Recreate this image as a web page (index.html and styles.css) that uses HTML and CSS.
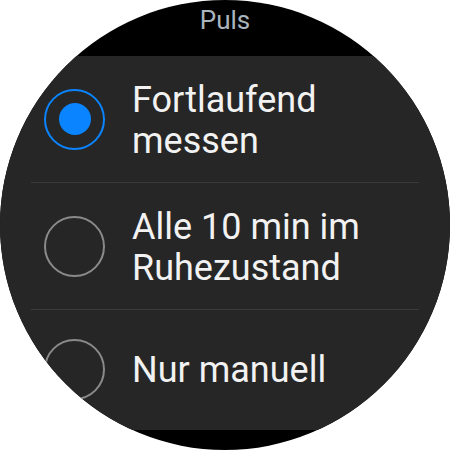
FILE: index.html
```html
<!DOCTYPE html>
<html lang="de">
<head>
<meta charset="utf-8">
<title>Puls</title>
<link rel="stylesheet" href="styles.css">
</head>
<body>
<div class="watch">
  <header class="title">Puls</header>
  <div class="panel">
    <div class="item">
      <span class="radio checked"><span class="dot"></span></span>
      <span class="label">Fortlaufend<br>messen</span>
    </div>
    <div class="divider"></div>
    <div class="item">
      <span class="radio"></span>
      <span class="label">Alle 10 min im<br>Ruhezustand</span>
    </div>
    <div class="divider"></div>
    <div class="item last">
      <span class="radio"></span>
      <span class="label">Nur manuell</span>
    </div>
  </div>
</div>
</body>
</html>
```
FILE: styles.css
```css
html, body {
  margin: 0;
  padding: 0;
  background: #ffffff;
}
.watch {
  width: 450px;
  height: 450px;
  border-radius: 50%;
  overflow: hidden;
  background: #000000;
  display: flex;
  flex-direction: column;
  font-family: Roboto, "Liberation Sans", sans-serif;
}
.title {
  height: 56px;
  flex: none;
  text-align: center;
  color: #a9b4bd;
  font-size: 26px;
  line-height: 40px;
}
.panel {
  height: 374px;
  flex: none;
  background: #262626;
  display: flex;
  flex-direction: column;
}
.item {
  height: 126px;
  flex: none;
  display: flex;
  align-items: center;
  padding-left: 44px;
}
.item.last {
  height: 118px;
}
.divider {
  height: 1px;
  flex: none;
  margin: 0 31px;
  background: #3a3a3a;
}
.radio {
  width: 57px;
  height: 57px;
  flex: none;
  border: 2px solid #8a8a8a;
  border-radius: 50%;
  display: flex;
  align-items: center;
  justify-content: center;
}
.radio.checked {
  border-color: #0a84ff;
}
.dot {
  width: 32px;
  height: 32px;
  border-radius: 50%;
  background: #0a84ff;
}
.label {
  margin-left: 27px;
  padding-top: 3px;
  color: #f2f2f2;
  font-size: 36px;
  line-height: 41px;
}
```
